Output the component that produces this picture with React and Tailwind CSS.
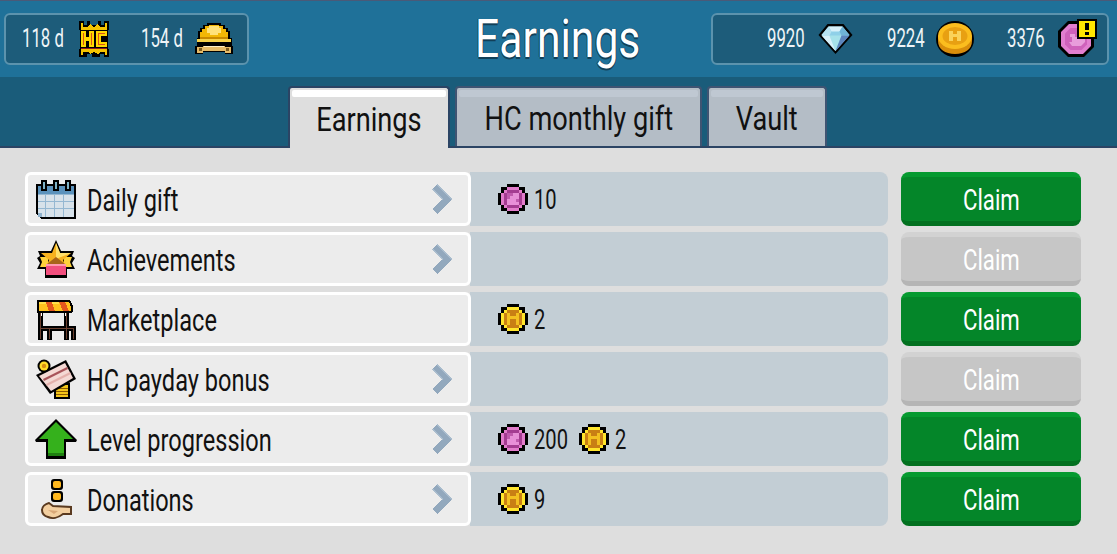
const FONT = { fontFamily: 'Roboto, "Noto Sans", "Liberation Sans", sans-serif' };

// the screenshot's font is a condensed one, none installed, so squeeze horizontally
const Squeeze = ({ className = '', children }) => (
    <span className={`inline-block whitespace-nowrap ${className}`}>{children}</span>
);

// pixel art helper: each char of a row is one square, '.' is empty
function Pixels({ rows, colors, size = 3 }) {
    const w = rows[0].length;
    return (
        <svg width={w * size} height={rows.length * size} viewBox={`0 0 ${w} ${rows.length}`} shapeRendering="crispEdges" className="shrink-0">
            {rows.map((row, y) => [...row].map((c, x) => c === '.' ? null : (
                <rect key={`${x}-${y}`} x={x} y={y} width="1" height="1" fill={colors[c]} />
            )))}
        </svg>
    );
}

const PINK_ROWS = [
    '...kkkk...',
    '.kkllllkk.',
    '.klmmmmlk.',
    'klmddhhmlk',
    'klmdhhhmlk',
    'klmhhhdmlk',
    'klmhhhhmlk',
    '.klmmmmlk.',
    '.kkllllkk.',
    '...kkkk...',
];
const GOLD_ROWS = [
    '...kkkk...',
    '.kkllllkk.',
    '.klmmmmlk.',
    'klmhmmhmlk',
    'klmhhhhmlk',
    'klmhmmhmlk',
    'klmhmmhmlk',
    '.klmmmmlk.',
    '.kkllllkk.',
    '...kkkk...',
];
const PinkCoin = () => <Pixels rows={PINK_ROWS} colors={{ k: '#000', l: '#e27ccb', m: '#a53c92', h: '#e88fd8', d: '#c05aae' }} />;
const GoldCoin = () => <Pixels rows={GOLD_ROWS} colors={{ k: '#000', l: '#ffe52c', m: '#c97f14', h: '#f3c020' }} />;

function HcBadge() {
    return (
        <svg width="32" height="40" viewBox="0 0 32 40" shapeRendering="crispEdges" className="shrink-0">
            <path d="M1 2h5v4h3V2h3v4h8V2h3v4h3V2h5v9h-1v19h1v8h-5v-3h-4v3h-8v-3H9v3H1v-8h1V11H1z" fill="#000" />
            <path d="M3 10h26v21H3z" fill="#8e1c22" />
            <path d="M3 4h2v4h5l2-3 4 3 4-3 2 3h5V4h2v7H3zM3 30h26v6h-2v-3h-5l-2 2-4-2-4 2-2-2H5v3H3z" fill="#f5c400" />
            <path d="M2 11h28v18H2z" fill="#000" />
            <path d="M3 12h5v6h3v-6h5v16h-5v-6H8v6H3zM18 12h11v5h-6v6h6v5H18z" fill="#ffd800" />
            <path d="M5 14h1v12H5zM13 14h1v12h-1zM20 14h7v1h-7zM20 25h7v1h-7zM20 14h1v12h-1z" fill="#d9541a" />
        </svg>
    );
}

function Helmet() {
    return (
        <svg width="38" height="34" viewBox="0 0 38 34" shapeRendering="crispEdges" className="shrink-0">
            <path d="M3 16V9h2V6h3V3h4V1h14v2h4v3h3v3h2v7h2v8h2v8H30v-2H8v2H0v-8h2v-8z" fill="#000" />
            <path d="M5 17V10h2V7h3V4h4V3h10v1h4v3h3v3h2v7z" fill="#f2b705" />
            <path d="M14 4h10v2h2v5h-3v2h-8v-2h-3V6h2z" fill="#ffe27a" />
            <path d="M5 15h28v2H5z" fill="#c98a00" />
            <path d="M2 17h34v3H2z" fill="#f7d24a" />
            <path d="M2 25h6v-1h22v1h6v6h-6v-2H8v2H2z" fill="#e6bb68" />
            <path d="M9 24h20v1H9z" fill="#fff0c8" />
            <path d="M4 26h3v3H4zM31 26h3v3h-3z" fill="#7a5a1e" />
        </svg>
    );
}

function Diamond() {
    return (
        <svg width="37" height="34" viewBox="0 0 36 34" className="shrink-0">
            <path d="M10 2h16l9 11-17 19L1 13z" fill="#000" />
            <path d="M11 4.500h14l7 8.500L18 29 4 13z" fill="#8fd0e8" />
            <path d="M11 4.500h14l-3 5h-8z" fill="#d8f1fa" />
            <path d="M4 13L11 4.500l3 5-2 4z" fill="#b6e3f2" />
            <path d="M32 13L25 4.500l-3 5 2 4z" fill="#6fb4d6" />
            <path d="M12 13.500h12L18 29z" fill="#a6e2ea" />
            <path d="M24 13.500h8L18 29z" fill="#5d86bd" />
            <path d="M4 13.500h8L18 29z" fill="#d8f1fa" />
        </svg>
    );
}

function BigCoin() {
    return (
        <svg width="38" height="36" viewBox="0 0 38 36" className="shrink-0">
            <ellipse cx="19" cy="18" rx="19" ry="18" fill="#000" />
            <path d="M2 15h34v5c0 8-7 13-17 13S2 28 2 20z" fill="#d98e0c" />
            <ellipse cx="19" cy="15" rx="17" ry="13" fill="#fbbd1e" />
            <ellipse cx="19" cy="15" rx="12.500" ry="9" fill="#e8a012" />
            <path d="M13 10h4v3h4v-3h4v10h-4v-4h-4v4h-4z" fill="#fad25a" />
        </svg>
    );
}

function DuckCoin() {
    return (
        <span className="relative flex w-[40px] h-[38px] shrink-0">
            <svg width="38" height="38" viewBox="0 0 38 38">
                <path d="M11 1h16l10 10v16L27 37H11L1 27V11z" fill="#000" />
                <path d="M12 4h14l8 8v14l-8 8H12l-8-8V12z" fill="#e27fd0" />
                <path d="M13.500 8h11l5.500 5.500v11L24.500 30h-11L8 24.500v-11z" fill="#cf62bb" />
                <path d="M13 14h5v3h3l2-2h5v7l-4 4h-9l-3-4h3v-5h-2z" fill="#e89ddb" />
            </svg>
            <span className="absolute right-0 top-[-1px] w-[20px] h-[20px] bg-[#ffe600] border-2 border-black flex flex-col items-center justify-center gap-[2px]">
                <span className="w-[4px] h-[7px] bg-black" />
                <span className="w-[4px] h-[3px] bg-black" />
            </span>
        </span>
    );
}

function Calendar() {
    return (
        <svg width="42" height="41" viewBox="0 0 42 41" shapeRendering="crispEdges">
            <path d="M1 5h40v35H6l-5-5z" fill="#000" />
            <path d="M3 7h36v8H3z" fill="#5b93bd" />
            <path d="M3 15h36v23H7l-4-4z" fill="#d7e2ea" />
            <path d="M3 15h36v1H3zM3 22h36v1H3zM3 29h36v1H3zM10 16h1v22h-1zM19 16h1v22h-1zM28 16h1v22h-1z" fill="#95b8d2" />
            <path d="M3 34h4v4H3z" fill="#8eb1cc" />
            <path d="M6 1h6v11H6zM18 1h6v11h-6zM30 1h6v11h-6z" fill="#000" />
            <path d="M8 3h2v7H8zM20 3h2v7h-2zM32 3h2v7h-2z" fill="#7fb3c6" />
        </svg>
    );
}

function StarBox() {
    return (
        <svg width="40" height="38" viewBox="0 0 40 38">
            <path d="M20 0l5 11h13l-2 5 3 2-3 5 3 6h-8v9H9v-9H1l3-6-3-5 3-2-2-5h13z" fill="#000" />
            <path d="M4 17h8v10H4l2-5zM36 17h-8v10h8l-2-5z" fill="#ffd23a" />
            <path d="M20 3l4 10 11 0-8 7 3 8-10-4-10 4 3-8-8-7 11 0z" fill="#f7b21f" />
            <path d="M20 3l4 10 11 0-15 6z" fill="#ffe06a" />
            <path d="M11 24l9-7 9 7z" fill="#a8641a" />
            <path d="M10 24h20v11H10z" fill="#f24f7e" />
            <path d="M10 24h20v2H10z" fill="#ff9ab0" />
        </svg>
    );
}

function Market() {
    return (
        <svg width="42" height="41" viewBox="0 0 42 41" shapeRendering="crispEdges">
            <path d="M2 1h33l3 6v5l-1 2H2z" fill="#000" />
            <path d="M4 3h30l2 5v4H4z" fill="#ffc21e" />
            <path d="M11 3h6l3 9h-6zM24 3h6l4 9h-6z" fill="#e2571e" />
            <path d="M4 3h7v2H4zM17 3h7v2h-7z" fill="#ffe04a" />
            <path d="M3 14h5v13h21V14h5v13h7v14h-5v-9h-2v9h-5v-9H17v9h-5v-9H8v9H3z" fill="#000" />
            <path d="M5 14h1v26H5zM31 14h1v26h-1zM6 29h33v1H6zM14 30h1v10h-1zM38 30h1v10h-1z" fill="#6b3f2e" />
            <path d="M6 14h1v3H6zM30 14h1v3h-1z" fill="#fff" />
        </svg>
    );
}

function Payday() {
    return (
        <svg width="40" height="40" viewBox="0 0 40 40">
            <path d="M18 24h16v16H18z" fill="#000" />
            <path d="M20 26h12v12H20z" fill="#f4c518" />
            <path d="M20 29h12v1H20zM20 32h12v1H20zM20 35h12v1H20z" fill="#8c5a00" />
            <path d="M0 16L30 1l10 19-26 15z" fill="#000" />
            <path d="M3 17L29 4l8 15-22 13z" fill="#f4d9d4" />
            <path d="M7 20l24-12 1 2L8 22z" fill="#a8545a" />
            <path d="M10 25l24-12 1 2L11 27z" fill="#e4b1ac" />
            <circle cx="8" cy="7" r="6.500" fill="#000" />
            <circle cx="8" cy="7" r="4.500" fill="#ffdc2a" />
            <circle cx="8" cy="7" r="2.200" fill="#d68f12" />
        </svg>
    );
}

function UpArrow() {
    return (
        <svg width="42" height="41" viewBox="0 0 42 41">
            <path d="M21 0l21 21-1 2H31v17H11V23H1l-1-2z" fill="#000" />
            <path d="M21 3l17 17H29v16H13V20H4z" fill="#35b11c" />
            <path d="M13 34h16v3H13z" fill="#1e7f10" />
        </svg>
    );
}

function Hand() {
    return (
        <svg width="32" height="41" viewBox="0 0 32 41">
            <rect x="11" y="0" width="12" height="11" rx="3" fill="#000" />
            <rect x="13" y="2" width="8" height="7" rx="2" fill="#ffb81e" />
            <rect x="11" y="12" width="12" height="11" rx="3" fill="#000" />
            <rect x="13" y="14" width="8" height="7" rx="2" fill="#ffb81e" />
            <path d="M2 31c0-3 3-6 7-7l4 3 18 1v7h-8c-5 4-11 5-15 3-4-1-6-4-6-7z" fill="#f3cfa0" stroke="#5a3a20" strokeWidth="2" />
            <path d="M8 31l10 1-4 3z" fill="#d9a878" />
        </svg>
    );
}

function Chevron() {
    return (
        <svg width="20" height="30" viewBox="0 0 20 30" className="shrink-0" shapeRendering="crispEdges">
            <path d="M5 0l15 15L5 30l-5-5 10-10L0 5z" fill="#92a8bd" />
            <path d="M5 0l15 15-1 1L4 1zM0 5l1-1 10 11-1 1z" fill="#a9bccd" />
        </svg>
    );
}

function Stat({ value, icon, slot, className = '' }) {
    return (
        <div className={`flex items-center ${className}`}>
            <span className={`${slot} shrink-0 pt-[3px]`}>
                <Squeeze className="text-[25px] leading-none text-[#eef4f7] origin-left scale-x-[0.67]">{value}</Squeeze>
            </span>
            {icon}
        </div>
    );
}

const ROWS = [
    { label: 'Daily gift', icon: <Calendar />, reward: [['pink', 10]], active: true },
    { label: 'Achievements', icon: <StarBox />, reward: [], active: false },
    { label: 'Marketplace', icon: <Market />, reward: [['gold', 2]], active: true, noArrow: true },
    { label: 'HC payday bonus', icon: <Payday />, reward: [], active: false },
    { label: 'Level progression', icon: <UpArrow />, reward: [['pink', 200], ['gold', 2]], active: true },
    { label: 'Donations', icon: <Hand />, reward: [['gold', 9]], active: true },
];

const TABS = [
    { label: 'Earnings', w: 'w-[162px]', active: true },
    { label: 'HC monthly gift', w: 'w-[247px]' },
    { label: 'Vault', w: 'w-[120px]' },
];

const REWARD_W = { 10: 'w-[24px]', 200: 'w-[35px]', 2: 'w-[12px]', 9: 'w-[12px]' };

export default function App() {
    return (
        <div style={FONT} className="w-[1117px] h-[554px] bg-[#dedede] overflow-hidden text-[#111]">
            {/* top bar */}
            <div className="h-[77px] bg-[#1f7199] border-t border-[#4a5a78] grid grid-cols-[1fr_auto_1fr] items-center pl-[4px] pr-[8px]">
                <div className="justify-self-start w-[245px] h-[52px] mb-[1px] bg-[#1d5c7a] border-2 border-[#5c93ad] rounded-[6px] flex items-center pl-[16px]">
                    <Stat value="118 d" slot="w-[56px]" className="w-[119px]" icon={<HcBadge />} />
                    <Stat value="154 d" slot="w-[54px]" icon={<Helmet />} />
                </div>
                <h1 className="ml-[3px] w-[170px] flex justify-center text-[54px] leading-none text-white [text-shadow:0_2px_0_#123f57,1px_0_0_#123f57,-1px_0_0_#123f57]">
                    <Squeeze className="scale-x-[0.79]">Earnings</Squeeze>
                </h1>
                <div className="justify-self-end w-[398px] h-[52px] mb-[1px] bg-[#1d5c7a] border-2 border-[#5c93ad] rounded-[6px] flex items-center pl-[54px]">
                    <Stat value="9920" slot="w-[50px]" className="w-[120px]" icon={<Diamond />} />
                    <Stat value="9224" slot="w-[49px]" className="w-[120px]" icon={<BigCoin />} />
                    <Stat value="3376" slot="w-[50px]" icon={<DuckCoin />} />
                </div>
            </div>

            {/* tabs */}
            <div className="h-[71px] bg-[#1a5c7a] border-b-2 border-[#2b4464] flex items-end justify-center gap-[5px] pr-[2px]">
                {TABS.map(t => (
                    <div key={t.label} className={`${t.w} border-2 border-b-0 rounded-t-[4px] flex flex-col p-[2px] ${t.active ? 'bg-[#dedede] border-[#2b4464] -mb-[2px] h-[62px]' : 'h-[60px] bg-[#b4bdc6] border-[#3f5472]'}`}>
                        <div className={`h-[7px] rounded-[2px] shrink-0 ${t.active ? 'bg-white' : 'bg-[#bfc8d2]'}`} />
                        <div className="flex-1 flex items-center justify-center text-[34px] leading-none pb-[6px]">
                            <Squeeze className="scale-x-[0.8]">{t.label}</Squeeze>
                        </div>
                    </div>
                ))}
            </div>

            {/* rows */}
            <div className="flex flex-col gap-[6px] pt-[24px] pl-[25px] pr-[36px]">
                {ROWS.map(r => (
                    <div key={r.label} className="flex h-[54px]">
                        <div className="w-[446px] border-[3px] border-white rounded-[6px] bg-[#ececec] flex items-center pl-[7px] pr-[16px] z-10">
                            <div className="w-[42px] flex justify-center shrink-0">{r.icon}</div>
                            <span className="ml-[10px] flex-1 text-[31px] leading-none pt-[2px]">
                                <Squeeze className="origin-left scale-x-[0.76]">{r.label}</Squeeze>
                            </span>
                            {!r.noArrow && <Chevron />}
                        </div>
                        <div className="w-[418px] -ml-[1px] bg-[#c3ced5] rounded-r-[8px] flex items-center pl-[28px] gap-[10px]">
                            {r.reward.map(([kind, n], i) => (
                                <div key={i} className="flex items-center gap-[6px]">
                                    {kind === 'pink' ? <PinkCoin /> : <GoldCoin />}
                                    <span className={`${REWARD_W[n]} text-[28px] leading-none pt-[2px]`}>
                                        <Squeeze className="origin-left scale-x-[0.72]">{n}</Squeeze>
                                    </span>
                                </div>
                            ))}
                        </div>
                        <button className={`ml-[13px] w-[180px] rounded-[8px] border-t-[5px] border-b-[5px] text-[30px] leading-none pt-[2px] text-white ${r.active ? 'bg-[#048629] border-t-[#059a30] border-b-[#02701f]' : 'bg-[#c6c6c6] border-t-[#d2d2d2] border-b-[#b5b5b5]'}`}>
                            <Squeeze className="scale-x-[0.74]">Claim</Squeeze>
                        </button>
                    </div>
                ))}
            </div>
        </div>
    );
}
